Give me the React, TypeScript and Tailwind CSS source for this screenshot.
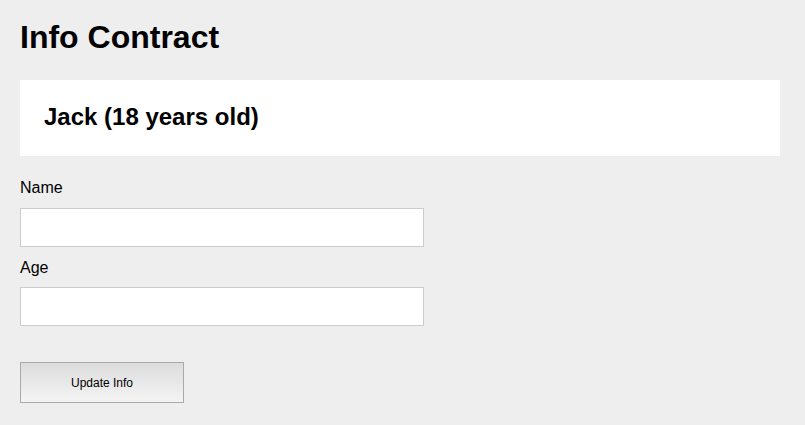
import React, { useState } from "react";

// Info Contract form — simple profile card + update fields
export default function App() {
  const [name, setName] = useState("");
  const [age, setAge] = useState("");

  return (
    <div className="min-h-screen bg-[#eeeeee] pl-[20px] pr-[25px] pt-[19px] font-['Liberation_Sans',Arial,sans-serif] text-black">
      <h1 className="text-[32px] font-bold leading-[37px] m-0">Info Contract</h1>

      {/* Profile card */}
      <div className="mt-[24px] h-[76px] bg-white px-[24px] pt-[23px]">
        <h2 className="text-[24px] font-bold leading-[28px]">Jack (18 years old)</h2>
      </div>

      {/* Form */}
      <div className="mt-[23px] flex flex-col">
        <label className="text-[16px] leading-[18px]">Name</label>
        <input
          type="text"
          value={name}
          onChange={(e) => setName(e.target.value)}
          className="mt-[11px] h-[39px] w-[404px] border border-[#cccccc] bg-white px-2 outline-none"
        />
        <label className="mt-[12px] text-[16px] leading-[18px]">Age</label>
        <input
          type="text"
          value={age}
          onChange={(e) => setAge(e.target.value)}
          className="mt-[10px] h-[39px] w-[404px] border border-[#cccccc] bg-white px-2 outline-none"
        />
        <button
          type="button"
          className="mt-[36px] h-[41px] w-[164px] border border-[#a9a9a9] bg-gradient-to-b from-[#dcdcdc] to-[#f4f4f4] text-[12px] text-black"
        >
          Update Info
        </button>
      </div>
    </div>
  );
}
